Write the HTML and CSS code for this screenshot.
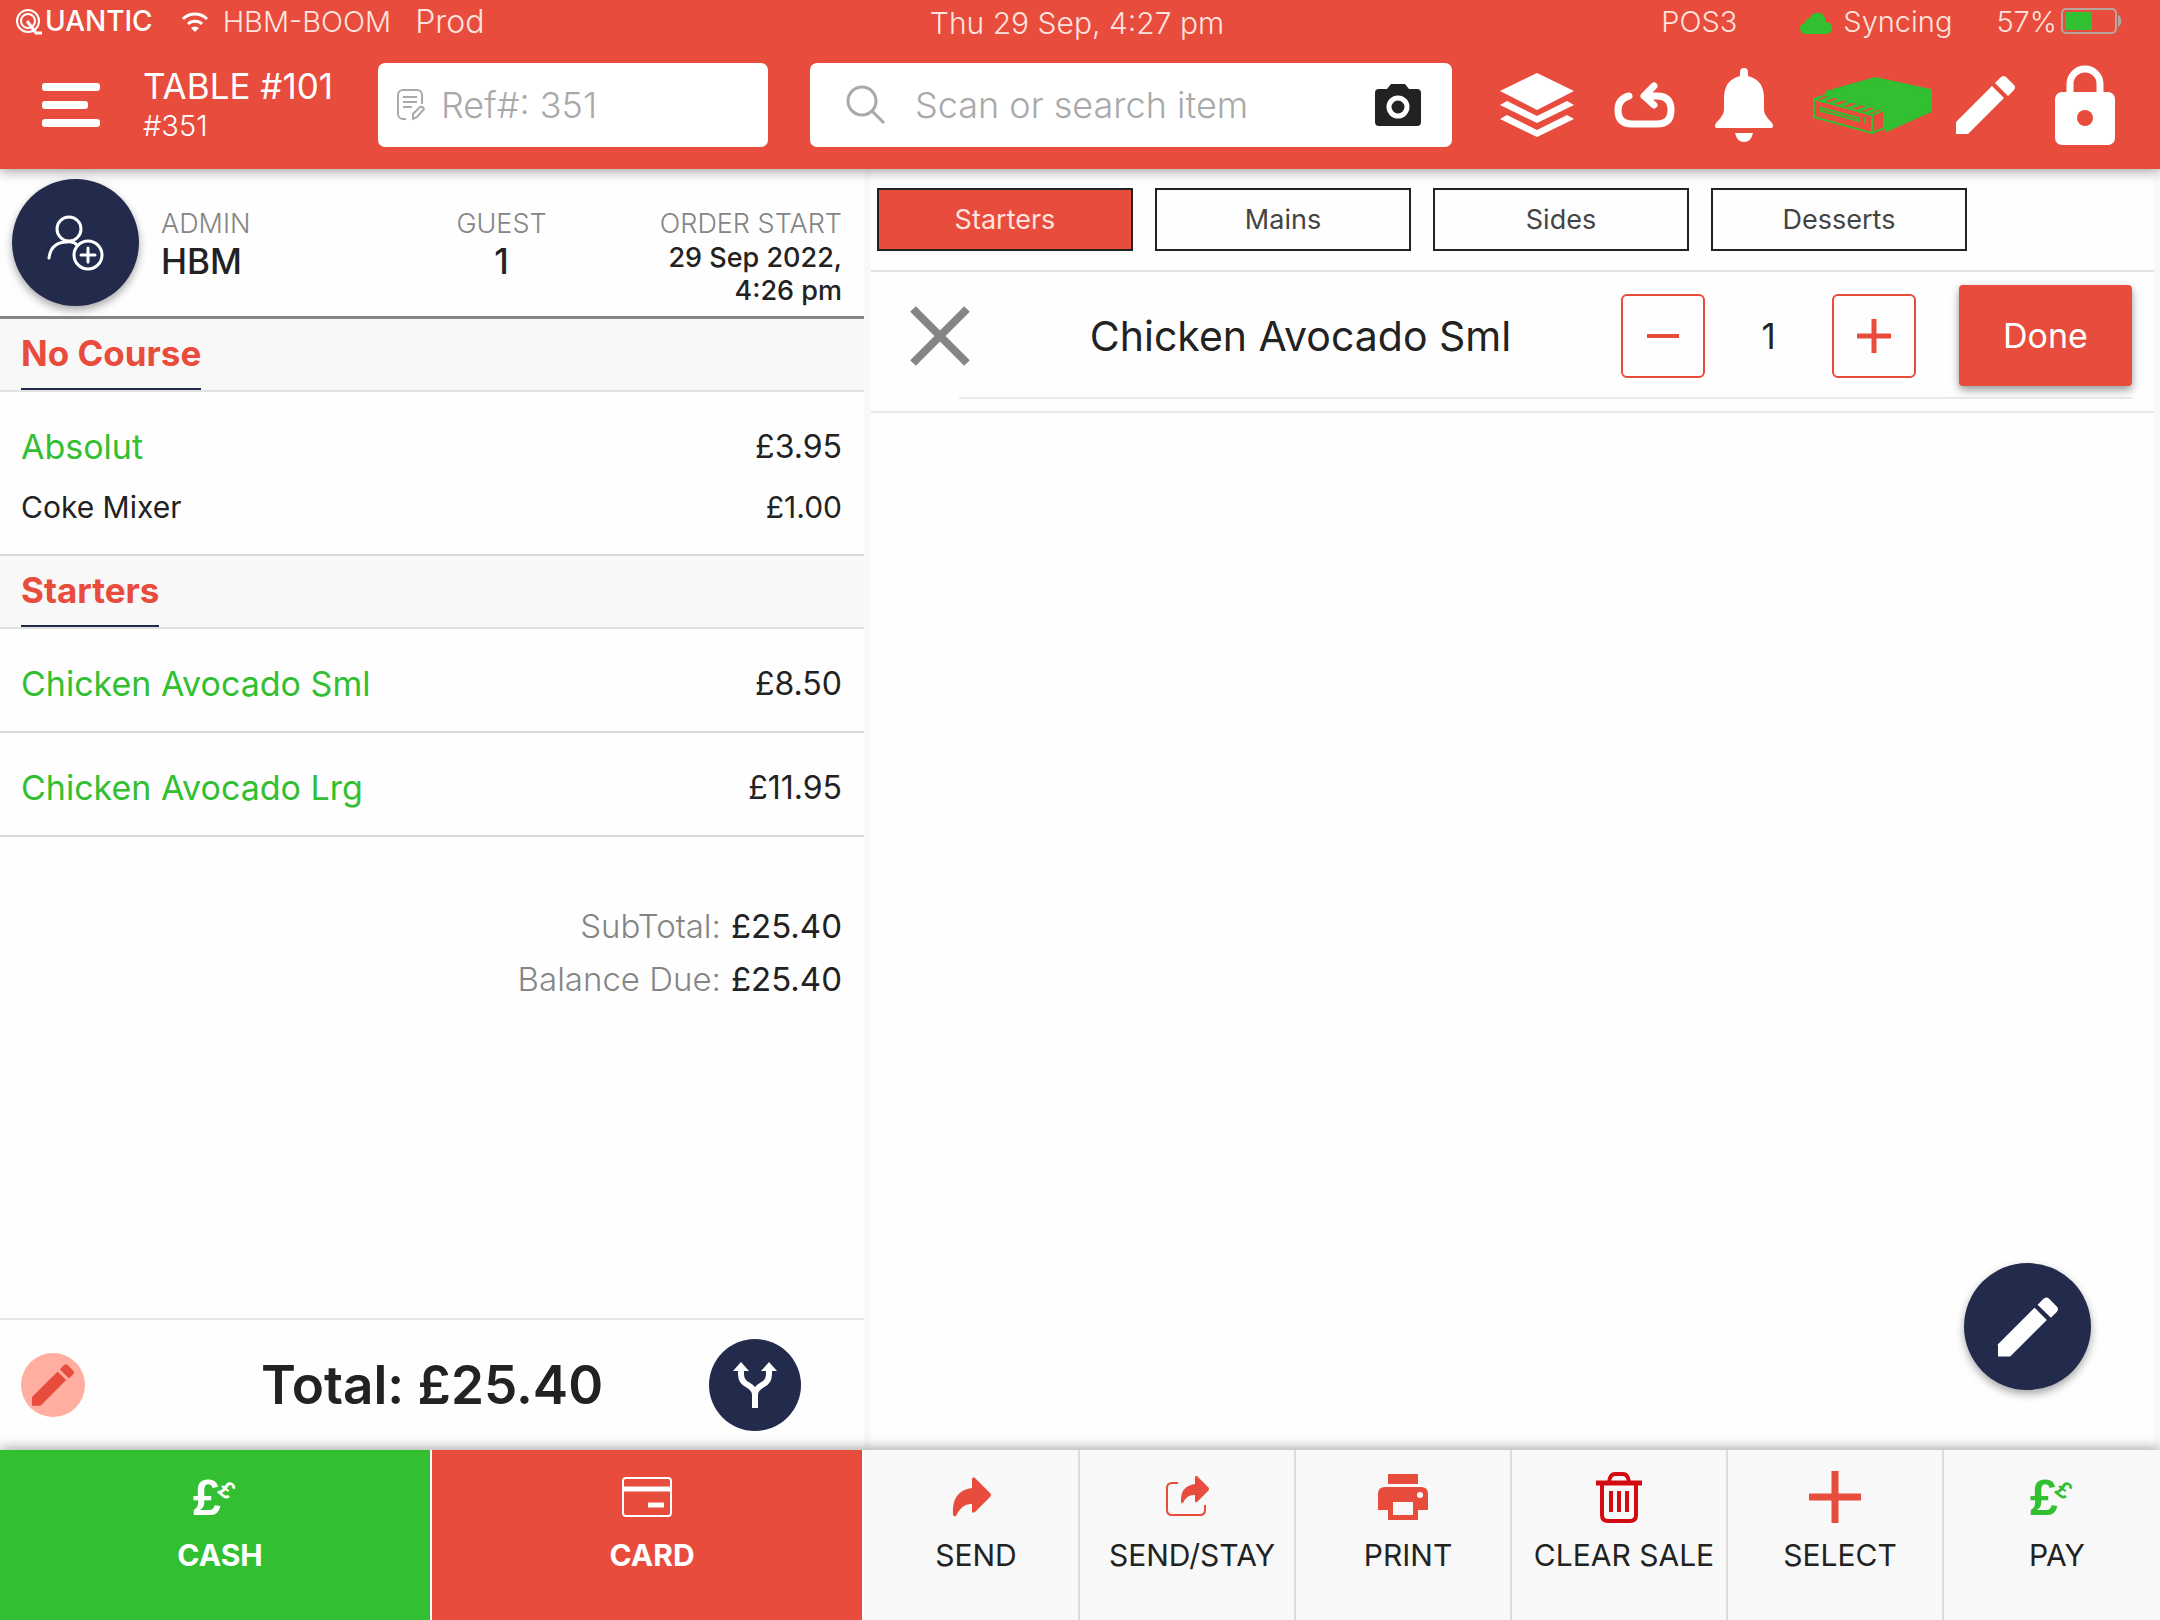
FILE: index.html
```html
<!DOCTYPE html>
<html lang="en">
<head>
    <meta charset="UTF-8">
    <meta name="viewport" content="width=device-width, initial-scale=1.0">
    <title>Quantic POS - Table #101</title>
    <link rel="stylesheet" href="styles.css">
</head>
<body>
    <header class="header">
        <div class="status-bar">
            <div class="status-left">
                <span class="brand">
                    <svg width="28" height="28" viewBox="0 0 28 28" fill="none" stroke="#fff" stroke-width="2" aria-label="Q">
                        <circle cx="13" cy="14" r="11"/>
                        <circle cx="13" cy="14" r="7"/>
                        <path d="M12 14l9 12h6" stroke-width="3"/>
                    </svg>
                    <span>UANTIC</span>
                </span>
                <svg class="wifi" width="28" height="21" viewBox="0 0 28 21" fill="none" stroke="#fff" stroke-width="3">
                    <path d="M2 8a17 17 0 0 1 24 0M7 13a10 10 0 0 1 14 0"/>
                    <path d="M14 21l-4-4a6 6 0 0 1 8 0z" fill="#fff" stroke="none"/>
                </svg>
                <span>HBM-BOOM</span>
                <span class="env">Prod</span>
            </div>
            <time class="clock">Thu 29 Sep, 4:27 pm</time>
            <div class="status-right">
                <span>POS3</span>
                <span class="sync">
                    <svg width="30" height="26" viewBox="0 0 30 26" fill="#32bf32">
                        <path d="M5 26a5 5 0 0 1-1-11 6 6 0 0 1 5-5 8 8 0 0 1 15 0q0 2 0 4a6 6 0 0 1 2 12z"/>
                    </svg>
                    <span>Syncing</span>
                </span>
                <span class="battery">
                    <span>57%</span>
                    <svg width="64" height="26" viewBox="0 0 64 26">
                        <rect x="1" y="1" width="54" height="24" rx="4" fill="none" stroke="#b9a5a0" stroke-width="2"/>
                        <rect x="4" y="4" width="27" height="18" fill="#32bf32"/>
                        <path d="M57 7a7 7 0 0 1 0 12z" fill="#b9a5a0"/>
                    </svg>
                </span>
            </div>
        </div>

        <div class="toolbar">
            <button class="icon-btn menu-btn" aria-label="Menu">
                <svg width="58" height="44" viewBox="0 0 58 44" fill="#fff">
                    <rect width="58" height="8" rx="3"/>
                    <rect y="18" width="46" height="8" rx="3"/>
                    <rect y="36" width="58" height="8" rx="3"/>
                </svg>
            </button>
            <div class="table-info">
                <h1>TABLE #101</h1>
                <p>#351</p>
            </div>
            <label class="field ref-field">
                <svg width="28" height="32" viewBox="0 0 28 32" fill="none" stroke="#a9a9a9" stroke-width="2">
                    <path d="M9 30H6a5 5 0 0 1-5-5V6a5 5 0 0 1 5-5h14a5 5 0 0 1 5 5v9M6 8h14M6 13h14M6 18h9"/>
                    <path d="M16 30v-5l7-7q3-1 4 2l-7 8z"/>
                </svg>
                <input type="text" placeholder="Ref#: 351" aria-label="Reference number">
            </label>
            <div class="field search-field">
                <svg width="40" height="40" viewBox="0 0 40 40" fill="none" stroke="#a9a9a9" stroke-width="3">
                    <circle cx="16" cy="16" r="14"/>
                    <path d="M26 26l12 12"/>
                </svg>
                <input type="text" placeholder="Scan or search item" aria-label="Scan or search item">
                <button class="icon-btn" aria-label="Camera">
                    <svg width="46" height="42" viewBox="0 0 46 42">
                        <path d="M4 5h8l4-5h14l4 5h8a4 4 0 0 1 4 4v29a4 4 0 0 1-4 4H4a4 4 0 0 1-4-4V9a4 4 0 0 1 4-4z" fill="#222"/>
                        <circle cx="23" cy="23" r="9" fill="none" stroke="#fff" stroke-width="5"/>
                    </svg>
                </button>
            </div>
            <nav class="actions">
                <button class="icon-btn" aria-label="Layers">
                    <svg width="74" height="64" viewBox="0 0 74 64" fill="#fff">
                        <path d="M37 0l37 18-37 19L0 18z"/>
                        <path d="M0 32l7-4 30 15 30-15 7 4-37 18z"/>
                        <path d="M0 46l7-4 30 15 30-15 7 4-37 18z"/>
                    </svg>
                </button>
                <button class="icon-btn" aria-label="Repeat">
                    <svg width="61" height="46" viewBox="0 0 61 46" fill="none" stroke="#fff" stroke-width="7" stroke-linecap="round" stroke-linejoin="round">
                        <path d="M15 14Q4 17 4 28q0 14 14 14h25q14 0 14-14 0-14-14-14H32M40 4L30 14l10 9"/>
                    </svg>
                </button>
                <button class="icon-btn" aria-label="Notifications">
                    <svg width="58" height="74" viewBox="0 0 58 74" fill="#fff">
                        <path d="M25 8V4q0-4 4-4t4 4v4q16 4 16 22v12q0 5 8 13 3 5-2 5H3q-5 0-2-5 8-8 8-13V30Q9 12 25 8z"/>
                        <path d="M20 65h18q-2 9-9 9t-9-9z"/>
                    </svg>
                </button>
                <button class="icon-btn drawer-btn" aria-label="Cash drawer">
                    <svg width="119" height="57" viewBox="0 0 119 57" fill="none" stroke="#32bf32" stroke-width="2">
                        <path d="M62 1l56 12v21L73 54l-3-19L13 20V15z" fill="#32bf32"/>
                        <path d="M1 22l12-4 58 15v18l-12 5L1 40z" fill="#e74c3c"/>
                        <path d="M1 22l58 16v18M59 38l12-5M8 31l38 10v3L8 34zM52 40v6"/>
                        <path d="M9 24l12-5M18 26l12-4M27 29l12-5M36 31l12-4M45 34l12-5M53 36l11-4" stroke-width="3"/>
                    </svg>
                </button>
                <button class="icon-btn" aria-label="Edit">
                    <svg width="59" height="58" viewBox="0 0 59 58" fill="#fff">
                        <path d="M0 46L36 10l12 12-36 36H0z"/>
                        <path d="M39 7l6-6q3-2 5 0l8 8q2 2 0 5l-6 6z"/>
                    </svg>
                </button>
                <button class="icon-btn" aria-label="Lock">
                    <svg width="60" height="80" viewBox="0 0 60 80">
                        <path d="M15 30V19a15 15 0 0 1 30 0v11" fill="none" stroke="#fff" stroke-width="7"/>
                        <rect y="27" width="60" height="53" rx="7" fill="#fff"/>
                        <circle cx="30" cy="53" r="8" fill="#e74c3c"/>
                    </svg>
                </button>
            </nav>
        </div>
    </header>

    <main class="main">
        <section class="order">
            <div class="order-head">
                <button class="round-btn" aria-label="Add customer">
                    <svg width="58" height="56" viewBox="0 0 58 56" fill="none" stroke="#fff" stroke-width="3" stroke-linecap="round">
                        <circle cx="22" cy="14" r="12"/>
                        <path d="M2 43Q4 27 20 27q7-1 10 3"/>
                        <circle cx="41" cy="40" r="14"/>
                        <path d="M41 33v14M34 40h14"/>
                    </svg>
                </button>
                <dl class="order-meta">
                    <div>
                        <dt>ADMIN</dt>
                        <dd>HBM</dd>
                    </div>
                    <div class="meta-guest">
                        <dt>GUEST</dt>
                        <dd>1</dd>
                    </div>
                    <div class="meta-start">
                        <dt>ORDER START</dt>
                        <dd>29 Sep 2022,<br>4:26 pm</dd>
                    </div>
                </dl>
            </div>

            <div class="course-head"><h2>No Course</h2></div>
            <table class="items">
                <tbody>
                    <tr><th scope="row">Absolut</th><td>£3.95</td></tr>
                    <tr class="modifier"><th scope="row">Coke Mixer</th><td>£1.00</td></tr>
                </tbody>
            </table>

            <div class="course-head"><h2>Starters</h2></div>
            <table class="items">
                <tbody>
                    <tr><th scope="row">Chicken Avocado Sml</th><td>£8.50</td></tr>
                </tbody>
                <tbody>
                    <tr><th scope="row">Chicken Avocado Lrg</th><td>£11.95</td></tr>
                </tbody>
            </table>

            <dl class="summary">
                <dt>SubTotal:</dt><dd>£25.40</dd>
                <dt>Balance Due:</dt><dd>£25.40</dd>
            </dl>

            <div class="total-bar">
                <button class="note-btn" aria-label="Edit total">
                    <svg width="42" height="42" viewBox="0 0 59 58" fill="#e74c3c">
                        <path d="M0 46L36 10l12 12-36 36H0z"/>
                        <path d="M39 7l6-6q3-2 5 0l8 8q2 2 0 5l-6 6z"/>
                    </svg>
                </button>
                <strong>Total: £25.40</strong>
                <button class="split-btn" aria-label="Split bill">
                    <svg width="44" height="46" viewBox="0 0 44 46" fill="none" stroke="#fff" stroke-width="6">
                        <path d="M8 6v6q0 8 7 11 7 4 7 10v13M36 6v6q0 8-7 11-7 4-7 10"/>
                        <path d="M8 0l8 9H0zM36 0l8 9H28z" fill="#fff" stroke="none"/>
                    </svg>
                </button>
            </div>
        </section>

        <section class="catalog">
            <nav class="tabs">
                <button class="tab active">Starters</button>
                <button class="tab">Mains</button>
                <button class="tab">Sides</button>
                <button class="tab">Desserts</button>
            </nav>
            <div class="editor">
                <div class="editor-row">
                    <button class="icon-btn" aria-label="Close">
                        <svg width="60" height="60" viewBox="0 0 60 60" stroke="#858585" stroke-width="8">
                            <path d="M3 3l54 54M57 3L3 57"/>
                        </svg>
                    </button>
                    <h2>Chicken Avocado Sml</h2>
                    <div class="stepper">
                        <button aria-label="Decrease">
                            <svg width="34" height="46" viewBox="0 0 34 46" stroke="#e74c3c" stroke-width="4"><path d="M1 23h32"/></svg>
                        </button>
                        <output>1</output>
                        <button aria-label="Increase">
                            <svg width="34" height="46" viewBox="0 0 34 46" stroke="#e74c3c" stroke-width="5"><path d="M0 23h34M17 6v34"/></svg>
                        </button>
                    </div>
                    <button class="done-btn">Done</button>
                </div>
                <hr>
            </div>
            <button class="round-btn fab" aria-label="Edit item">
                <svg width="60" height="60" viewBox="0 0 59 58" fill="#fff">
                    <path d="M0 46L36 10l12 12-36 36H0z"/>
                    <path d="M39 7l6-6q3-2 5 0l8 8q2 2 0 5l-6 6z"/>
                </svg>
            </button>
        </section>
    </main>

    <footer class="footer">
        <button class="pay-btn cash">
            <svg width="52" height="52" viewBox="0 0 52 52" fill="#fff">
                <text class="pound" x="4" y="44">£</text>
                <text class="pound small" transform="translate(38 19) rotate(38)" y="8">£</text>
            </svg>
            <span>CASH</span>
        </button>
        <button class="pay-btn card">
            <svg width="52" height="52" viewBox="0 0 52 52" fill="none" stroke="#fff" stroke-width="2">
                <rect x="2" y="7" width="48" height="38" rx="3"/>
                <path d="M2 18h48" stroke-width="5"/>
                <path d="M27 34h16" stroke-width="5"/>
            </svg>
            <span>CARD</span>
        </button>
        <button class="foot-btn">
            <svg width="52" height="52" viewBox="0 0 52 52" fill="#e74c3c">
                <path d="M27 8q1-3 3-1l15 15q2 2 0 4L30 41q-3 2-3-1v-7q-10-1-16 12-2 1-3-1Q6 20 27 17z"/>
            </svg>
            <span>SEND</span>
        </button>
        <button class="foot-btn">
            <svg width="52" height="52" viewBox="0 0 52 52" fill="#e74c3c">
                <path d="M17 12h-6q-5 0-5 5v22q0 5 5 5h28q5 0 5-5v-5" fill="none" stroke="#e74c3c" stroke-width="2"/>
                <path d="M34 6q1-2 2-1l11 11q2 2 0 4L36 31q-2 1-2-1v-6q-8-1-12 8-1 1-2-1-1-16 14-18z"/>
            </svg>
            <span>SEND/STAY</span>
        </button>
        <button class="foot-btn">
            <svg width="52" height="52" viewBox="0 0 52 52" fill="#e74c3c">
                <rect x="11" y="3" width="30" height="10"/>
                <path d="M8 16h36q7 0 7 7v16H41v10H11V39H1V23q0-7 7-7z"/>
                <rect x="16" y="31" width="20" height="13" fill="#f8f8f8"/>
                <circle cx="43" cy="24" r="3" fill="#f8f8f8"/>
            </svg>
            <span>PRINT</span>
        </button>
        <button class="foot-btn">
            <svg width="52" height="52" viewBox="0 0 52 52" fill="none" stroke="#d20a11" stroke-width="4">
                <path d="M3 12h46" stroke-width="5"/>
                <path d="M16 11q1-8 6-8h8q5 0 6 8"/>
                <path d="M9 12v32q0 6 6 6h22q6 0 6-6V12M18 20v21M26 20v21M34 20v21"/>
            </svg>
            <span>CLEAR SALE</span>
        </button>
        <button class="foot-btn">
            <svg width="52" height="52" viewBox="0 0 52 52" stroke="#e74c3c" stroke-width="7"><path d="M0 26h52M26 0v52"/></svg>
            <span>SELECT</span>
        </button>
        <button class="foot-btn">
            <svg width="52" height="52" viewBox="0 0 52 52" fill="#32bf32">
                <text class="pound" x="4" y="44">£</text>
                <text class="pound small" transform="translate(38 19) rotate(38)" y="8">£</text>
            </svg>
            <span>PAY</span>
        </button>
    </footer>
</body>
</html>
```
FILE: styles.css
```css
* {
    margin: 0;
    padding: 0;
    box-sizing: border-box;
}

body {
    font-family: Inter, sans-serif;
    min-height: 100vh;
    display: flex;
    flex-direction: column;
    background: #fefefe;
    color: #222;
}

svg {
    display: block;
    flex-shrink: 0;
    overflow: visible;
}

button {
    font-family: inherit;
    color: inherit;
    border: none;
    cursor: pointer;
}

.icon-btn {
    background: none;
    flex-shrink: 0;
}

/* header */
.header {
    background: #e74c3c;
    color: #fff;
    box-shadow: 0 2px 12px rgba(0,0,0,0.4);
    position: relative;
    z-index: 2;
    padding-bottom: 22px;
}

.status-bar {
    display: grid;
    grid-template-columns: 1fr auto 1fr;
    align-items: center;
    height: 42px;
    padding: 0 35px 0 15px;
    font-size: 29px;
    font-weight: 300;
    color: #ffe3df;
}

.status-left,
.status-right,
.brand,
.sync,
.battery {
    display: flex;
    align-items: center;
}

.status-right {
    justify-content: flex-end;
}

.brand {
    gap: 2px;
    font-size: 28px;
    font-weight: 500;
    color: #fff;
}

.wifi {
    margin: 0 14px 0 28px;
}

.env {
    margin-left: 24px;
    font-size: 32px;
}

.clock {
    font-size: 30px;
    padding: 4px 0 0 14px;
}

.sync {
    gap: 12px;
    margin: 0 44px 0 64px;
}

.battery {
    gap: 4px;
}

.toolbar {
    display: flex;
    align-items: center;
    padding: 0 45px 0 42px;
    margin-top: 21px;
    height: 84px;
}

.menu-btn {
    margin-right: 43px;
}

.table-info {
    width: 235px;
    flex-shrink: 0;
}

.table-info h1 {
    font-size: 35px;
    font-weight: 400;
    line-height: 42px;
    white-space: nowrap;
}

.table-info p {
    font-size: 29px;
    font-weight: 300;
    line-height: 38px;
}

.field {
    display: flex;
    align-items: center;
    min-width: 0;
    height: 84px;
    background: #fff;
    border-radius: 7px;
}

.field input {
    flex: 1;
    min-width: 0;
    border: none;
    outline: none;
    background: none;
    font-family: inherit;
    font-weight: 300;
    font-size: 36px;
    color: #222;
}

.field input::placeholder {
    color: #a9a9a9;
    opacity: 1;
}

.ref-field {
    width: 390px;
    padding: 0 19px;
    gap: 16px;
    margin-right: 42px;
}

.search-field {
    flex: 1;
    padding: 0 31px 0 36px;
    gap: 29px;
    margin-right: 48px;
}

.actions {
    display: flex;
    align-items: center;
    flex-shrink: 0;
    gap: 40px;
}

.drawer-btn {
    margin-right: -16px;
}

/* main */
.main {
    flex: 1;
    display: grid;
    grid-template-columns: 2fr 3fr;
}

.order {
    display: flex;
    flex-direction: column;
}

.order-head {
    display: flex;
    align-items: center;
    height: 150px;
    padding: 0 22px 0 12px;
    border-bottom: 3px solid #858585;
}

.round-btn {
    width: 127px;
    height: 127px;
    flex-shrink: 0;
    display: flex;
    align-items: center;
    justify-content: center;
    border-radius: 50%;
    background: #232b4d;
    box-shadow: 0 4px 8px rgba(0,0,0,0.35);
}

.order-meta {
    flex: 1;
    display: grid;
    grid-template-columns: 1fr auto 1fr;
    align-self: flex-start;
    margin: 38px 0 0 22px;
}

.order-meta dt {
    font-size: 27px;
    font-weight: 300;
    line-height: 34px;
    color: #858585;
}

.order-meta dd {
    font-size: 35px;
    font-weight: 500;
    line-height: 40px;
}

.meta-guest {
    text-align: center;
}

.order-meta .meta-start {
    text-align: right;
}

.order-meta .meta-start dd {
    font-size: 27px;
    line-height: 33px;
}

.course-head {
    background: #f8f8f8;
    border-bottom: 2px solid #e2e2e2;
    padding: 0 21px;
    display: flex;
}

.course-head h2 {
    font-size: 35px;
    font-weight: 700;
    line-height: 69px;
    color: #e74c3c;
    border-bottom: 2px solid #232b4d;
}

.items {
    width: 100%;
    border-collapse: collapse;
}

.items tbody {
    border-bottom: 2px solid #d8d8d8;
}

.items th,
.items td {
    line-height: 60px;
    font-size: 32px;
    font-weight: 400;
}

.items th {
    text-align: left;
    font-size: 34px;
    color: #32bf32;
    padding-left: 21px;
}

.items td {
    text-align: right;
    padding-right: 22px;
}

.items tr:first-child > * {
    padding-top: 25px;
}

.items tr:last-child > * {
    padding-bottom: 17px;
}

.items .modifier > * {
    font-size: 30px;
    color: #222;
}

.summary {
    display: grid;
    grid-template-columns: 1fr auto;
    column-gap: 10px;
    padding: 63px 22px 24px;
    text-align: right;
    line-height: 53px;
    font-size: 33px;
}

.summary dt {
    font-weight: 300;
    color: #858585;
}

.total-bar {
    margin-top: auto;
    height: 132px;
    display: grid;
    grid-template-columns: 1fr auto 1fr;
    align-items: center;
    padding: 0 21px;
    border-top: 2px solid #e6e6e6;
}

.total-bar strong {
    font-size: 53px;
    font-weight: 600;
}

.note-btn,
.split-btn {
    display: flex;
    align-items: center;
    justify-content: center;
    border-radius: 50%;
}

.note-btn {
    width: 64px;
    height: 64px;
    background: #ffaea0;
}

.split-btn {
    width: 92px;
    height: 92px;
    justify-self: end;
    margin-right: 42px;
    background: #232b4d;
}

.catalog {
    position: relative;
    border-left: 7px solid #f9f9f9;
    border-right: 6px solid #f9f9f9;
}

.tabs {
    display: flex;
    gap: 22px;
    padding: 19px 0 19px 6px;
    border-bottom: 2px solid #e2e2e2;
}

.tab {
    width: 256px;
    height: 63px;
    border: 2px solid #222;
    background: #fefefe;
    font-size: 27px;
    font-weight: 400;
    color: #444;
}

.tab.active {
    background: #e74c3c;
    color: #ffe3df;
}

.editor {
    border-bottom: 2px solid #e9e9e9;
    padding: 13px 22px 12px 39px;
}

.editor-row {
    display: flex;
    align-items: center;
}

.editor-row h2 {
    flex: 1;
    padding-left: 10px;
    text-align: center;
    font-size: 41px;
    font-weight: 400;
    white-space: nowrap;
}

.editor hr {
    margin: 11px 0 0 49px;
    border: none;
    border-top: 2px solid #e9e9e9;
}

.stepper {
    display: flex;
    align-items: center;
}

.stepper button {
    width: 84px;
    height: 84px;
    display: flex;
    align-items: center;
    justify-content: center;
    background: #fefefe;
    border: 2px solid #e74c3c;
    border-radius: 6px;
}

.stepper output {
    width: 127px;
    text-align: center;
    font-size: 35px;
    font-weight: 400;
}

.done-btn {
    width: 173px;
    height: 101px;
    margin-left: 43px;
    background: #e74c3c;
    color: #fff;
    font-size: 34px;
    font-weight: 400;
    border-radius: 4px;
    box-shadow: 0 4px 8px rgba(0,0,0,0.4);
}

.fab {
    position: absolute;
    right: 63px;
    bottom: 60px;
}

/* footer */
.footer {
    display: grid;
    grid-template-columns: 2fr 2fr repeat(6, 1fr);
    height: 170px;
    background: #f8f8f8;
    box-shadow: 0 -2px 12px rgba(0,0,0,0.35);
    position: relative;
    z-index: 2;
}

.footer button {
    display: flex;
    flex-direction: column;
    align-items: center;
    padding-top: 21px;
    gap: 13px;
    font-size: 30px;
    line-height: 38px;
    white-space: nowrap;
    border-right: 2px solid #dcdcdc;
}

.footer span {
    padding-left: 10px;
}

.footer .pay-btn {
    color: #fff;
    font-weight: 700;
    border-color: #fff;
}

.cash {
    background: #32bf32;
}

.card {
    background: #e74c3c;
}

.foot-btn {
    background: #f8f8f8;
    font-weight: 400;
}

.footer button:last-child {
    border-right: none;
}

.pound {
    font-family: "Liberation Sans", sans-serif;
    font-size: 50px;
    font-weight: 700;
}

.pound.small {
    font-size: 24px;
    text-anchor: middle;
}
```
